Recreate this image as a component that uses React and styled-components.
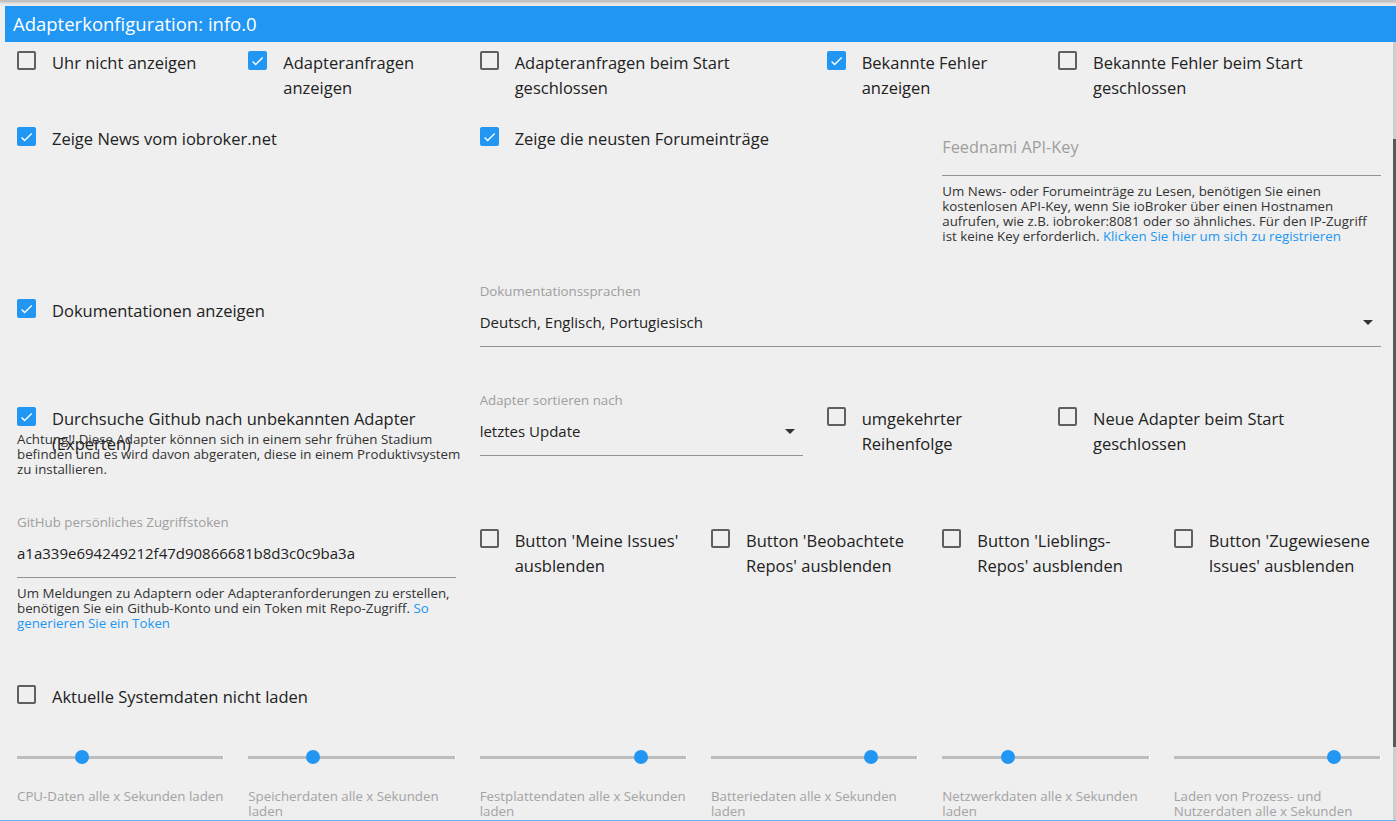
import React from "react";
import styled, { createGlobalStyle } from "styled-components";

const GlobalStyle = createGlobalStyle`
  html, body {
    margin: 0;
    padding: 0;
  }
  body {
    font-family: "Open Sans", "Noto Sans", sans-serif;
    background: #efefef;
    overflow: hidden;
  }
  * {
    box-sizing: border-box;
  }
`;

const Page = styled.div`
  display: flex;
  flex-direction: column;
  width: 1396px;
  height: 821px;
  background: #efefef;
  overflow: hidden;
`;

const TopStrip = styled.div`
  height: 6px;
  flex: 0 0 6px;
  background: linear-gradient(#c2c2c2 0, #c2c2c2 2px, #e2e2e2 3px, #ececec 6px);
`;

const Window = styled.div`
  flex: 1;
  min-height: 0;
  display: flex;
  flex-direction: column;
  margin-left: 5px;
`;

const Header = styled.div`
  flex: 0 0 36px;
  height: 36px;
  line-height: 36px;
  background: #2196f3;
  color: #fff;
  font-size: 18.5px;
  padding-left: 8px;
  white-space: nowrap;
`;

const Body = styled.div`
  flex: 1;
  min-height: 0;
  display: flex;
`;

const Content = styled.div`
  flex: 1;
  min-width: 0;
  overflow: hidden;
`;

const Scrollbar = styled.div`
  flex: 0 0 3px;
  background: #cdcdcd;
  display: flex;
  flex-direction: column;
`;

const ScrollThumb = styled.div`
  margin-top: 97px;
  height: 608px;
  background: #585858;
`;

const BottomLine = styled.div`
  flex: 0 0 1px;
  background: #64b5f6;
`;

const Row = styled.div`
  display: grid;
  grid-template-columns: repeat(12, 1fr);
  align-items: start;
  margin-top: ${(p) => p.$mt || 0}px;
`;

const Cell = styled.div`
  grid-column: span ${(p) => p.$span};
  padding: ${(p) => p.$pt || 0}px 12px 0;
  min-width: 0;
`;

/* checkbox */
const CheckRow = styled.label`
  display: flex;
  align-items: flex-start;
  gap: 16px;
  height: ${(p) => (p.$fixed ? "25px" : "auto")};
`;

const Box = styled.span`
  flex: 0 0 19px;
  width: 19px;
  height: 19px;
  margin-top: 1px;
  border-radius: 2px;
  border: 2px solid ${(p) => (p.$on ? "#2196f3" : "#5f5f5f")};
  background: ${(p) => (p.$on ? "#2196f3" : "transparent")};
  display: flex;
  align-items: center;
  justify-content: center;
`;

const LabelText = styled.span`
  font-size: 16.5px;
  line-height: 25px;
  color: #222;
  white-space: nowrap;
`;

const Lines = ({ lines }) =>
  lines.map((l, i) => (
    <React.Fragment key={i}>
      {i > 0 && <br />}
      {l}
    </React.Fragment>
  ));

function Check({ on, lines, fixed }) {
  return (
    <CheckRow $fixed={fixed}>
      <Box $on={on}>
        {on && (
          <svg width="16" height="16" viewBox="0 0 24 24">
            <path
              fill="#fff"
              d="M9 16.17 4.83 12l-1.42 1.41L9 19 21 7l-1.41-1.41z"
            />
          </svg>
        )}
      </Box>
      <LabelText>
        <Lines lines={lines} />
      </LabelText>
    </CheckRow>
  );
}

/* text fields */
const Helper = styled.div`
  font-size: 13.3px;
  line-height: 15px;
  color: #333;
  margin-top: ${(p) => p.$mt || 0}px;
  white-space: nowrap;
`;

const Link = styled.a`
  color: #2196f3;
  text-decoration: none;
`;

const PlainInput = styled.div`
  font-size: 16.3px;
  line-height: 25px;
  color: #9e9e9e;
  padding-bottom: 15px;
  border-bottom: 1px solid #949494;
`;

const FieldLabel = styled.div`
  font-size: 13.3px;
  line-height: 16px;
  color: #9e9e9e;
  white-space: nowrap;
`;

const InputBox = styled.div`
  display: flex;
  align-items: center;
  padding: 13px 0 14px;
  border-bottom: 1px solid #949494;
`;

const Value = styled.div`
  flex: 1;
  font-size: 15px;
  line-height: 20px;
  color: #222;
  white-space: nowrap;
`;

const Arrow = styled.svg`
  flex: 0 0 10px;
  margin-right: 8px;
`;

function Select({ label, value }) {
  return (
    <div>
      <FieldLabel>{label}</FieldLabel>
      <InputBox>
        <Value>{value}</Value>
        <Arrow width="10" height="5" viewBox="0 0 10 5">
          <path d="M0 0l5 5 5-5z" fill="#333" />
        </Arrow>
      </InputBox>
    </div>
  );
}

/* sliders */
const SliderBox = styled.div`
  height: 30px;
  display: flex;
  align-items: center;
`;

const Track = styled.div`
  position: relative;
  flex: 1;
  height: 3px;
  background: #bdbdbd;
  border-right: 1px solid #fff;
`;

const Knob = styled.span`
  position: absolute;
  top: 50%;
  width: 14px;
  height: 14px;
  margin: -7px 0 0 -7px;
  border-radius: 50%;
  background: #2196f3;
`;

const SliderLabel = styled.div`
  margin-top: 17px;
  font-size: 13.3px;
  line-height: 15px;
  color: #a3a3a3;
  white-space: nowrap;
`;

const sliders = [
  { value: 31.5, lines: ["CPU-Daten alle x Sekunden laden"] },
  { value: 31.5, lines: ["Speicherdaten alle x Sekunden", "laden"] },
  { value: 78, lines: ["Festplattendaten alle x Sekunden", "laden"] },
  { value: 77.7, lines: ["Batteriedaten alle x Sekunden", "laden"] },
  { value: 32, lines: ["Netzwerkdaten alle x Sekunden", "laden"] },
  { value: 77.7, lines: ["Laden von Prozess- und", "Nutzerdaten alle x Sekunden"] },
];

export default function App() {
  return (
    <Page>
      <GlobalStyle />
      <TopStrip />
      <Window>
        <Header>Adapterkonfiguration: info.0</Header>
        <Body>
          <Content>
            <Row>
              <Cell $span={2} $pt={8}>
                <Check lines={["Uhr nicht anzeigen"]} />
              </Cell>
              <Cell $span={2} $pt={8}>
                <Check on lines={["Adapteranfragen", "anzeigen"]} />
              </Cell>
              <Cell $span={3} $pt={8}>
                <Check lines={["Adapteranfragen beim Start", "geschlossen"]} />
              </Cell>
              <Cell $span={2} $pt={8}>
                <Check on lines={["Bekannte Fehler", "anzeigen"]} />
              </Cell>
              <Cell $span={3} $pt={8}>
                <Check lines={["Bekannte Fehler beim Start", "geschlossen"]} />
              </Cell>
            </Row>

            <Row $mt={26}>
              <Cell $span={4}>
                <Check on lines={["Zeige News vom iobroker.net"]} />
              </Cell>
              <Cell $span={4}>
                <Check on lines={["Zeige die neusten Forumeinträge"]} />
              </Cell>
              <Cell $span={4} $pt={9}>
                <PlainInput>Feednami API-Key</PlainInput>
                <Helper $mt={8}>
                  Um News- oder Forumeinträge zu Lesen, benötigen Sie einen
                  <br />
                  kostenlosen API-Key, wenn Sie ioBroker über einen Hostnamen
                  <br />
                  aufrufen, wie z.B. iobroker:8081 oder so ähnliches. Für den
                  IP-Zugriff
                  <br />
                  ist keine Key erforderlich.{" "}
                  <Link href="#">Klicken Sie hier um sich zu registrieren</Link>
                </Helper>
              </Cell>
            </Row>

            <Row $mt={39}>
              <Cell $span={4} $pt={15}>
                <Check on lines={["Dokumentationen anzeigen"]} />
              </Cell>
              <Cell $span={8}>
                <Select
                  label="Dokumentationssprachen"
                  value="Deutsch, Englisch, Portugiesisch"
                />
              </Cell>
            </Row>

            <Row $mt={45}>
              <Cell $span={4} $pt={14}>
                <Check
                  on
                  fixed
                  lines={["Durchsuche Github nach unbekannten Adapter", "(Experten)"]}
                />
                <Helper $mt={1}>
                  Achtung!! Diese Adapter können sich in einem sehr frühen Stadium
                  <br />
                  befinden und es wird davon abgeraten, diese in einem
                  Produktivsystem
                  <br />
                  zu installieren.
                </Helper>
              </Cell>
              <Cell $span={3}>
                <Select label="Adapter sortieren nach" value="letztes Update" />
              </Cell>
              <Cell $span={2} $pt={14}>
                <Check lines={["umgekehrter", "Reihenfolge"]} />
              </Cell>
              <Cell $span={3} $pt={14}>
                <Check lines={["Neue Adapter beim Start", "geschlossen"]} />
              </Cell>
            </Row>

            <Row $mt={37}>
              <Cell $span={4}>
                <FieldLabel>GitHub persönliches Zugriffstoken</FieldLabel>
                <InputBox>
                  <Value>a1a339e694249212f47d90866681b8d3c0c9ba3a</Value>
                </InputBox>
                <Helper $mt={8}>
                  Um Meldungen zu Adaptern oder Adapteranforderungen zu erstellen,
                  <br />
                  benötigen Sie ein Github-Konto und ein Token mit Repo-Zugriff.{" "}
                  <Link href="#">So</Link>
                  <br />
                  <Link href="#">generieren Sie ein Token</Link>
                </Helper>
              </Cell>
              <Cell $span={2} $pt={14}>
                <Check lines={["Button 'Meine Issues'", "ausblenden"]} />
              </Cell>
              <Cell $span={2} $pt={14}>
                <Check lines={["Button 'Beobachtete", "Repos' ausblenden"]} />
              </Cell>
              <Cell $span={2} $pt={14}>
                <Check lines={["Button 'Lieblings-", "Repos' ausblenden"]} />
              </Cell>
              <Cell $span={2} $pt={14}>
                <Check lines={["Button 'Zugewiesene", "Issues' ausblenden"]} />
              </Cell>
            </Row>

            <Row $mt={53}>
              <Cell $span={4}>
                <Check lines={["Aktuelle Systemdaten nicht laden"]} />
              </Cell>
            </Row>

            <Row $mt={33}>
              {sliders.map((s, i) => (
                <Cell $span={2} key={i}>
                  <SliderBox>
                    <Track>
                      <Knob style={{ left: `${s.value}%` }} />
                    </Track>
                  </SliderBox>
                  <SliderLabel>
                    <Lines lines={s.lines} />
                  </SliderLabel>
                </Cell>
              ))}
            </Row>
          </Content>
          <Scrollbar>
            <ScrollThumb />
          </Scrollbar>
        </Body>
      </Window>
      <BottomLine />
    </Page>
  );
}
